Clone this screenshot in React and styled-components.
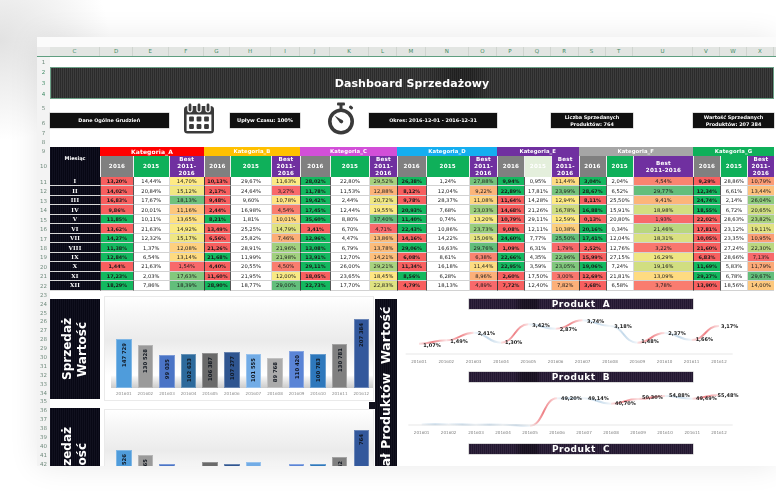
import React from "react";
import styled, { createGlobalStyle } from "styled-components";

const COLS = "50px 33px 35.5px 35.5px 26px 41px 29px 30px 39px 28px 28.5px 43.5px 28px 27px 27px 27.5px 27px 27.5px 60px 27px 27px 27px";
const LETTERS = "C D E F G H I J K L M N O P Q R S T U V W X".split(" ");
const SANS = `"DejaVu Sans", Verdana, sans-serif`;
const CATS = [
  ["Kategoria_A", "#ff0000"], ["Kategoria_B", "#ffc000"], ["Kategoria_C", "#d24fd8"], ["Kategoria_D", "#14aef0"],
  ["Kategoria_E", "#7030a0"], ["Kategoria_F", "#a6a6a6"], ["Kategoria_G", "#0fb05a"],
];
const ROMAN = ["I", "II", "III", "IV", "V", "VI", "VII", "VIII", "IX", "X", "XI", "XII"];
const DATA = [
  "13,20 14,44 14,70 10,13 29,67 11,63 28,02 22,80 29,52 26,38 1,24 27,88 9,94 0,95 11,44 3,04 2,04 4,54 9,29 28,86 10,79",
  "14,02 20,84 15,12 2,17 24,64 3,27 11,78 11,53 12,88 8,12 12,04 9,22 22,89 17,81 23,99 28,67 6,52 29,77 12,34 6,61 13,44",
  "16,83 17,67 18,13 9,48 9,60 10,78 19,42 2,44 20,72 9,78 28,37 11,08 11,64 14,28 12,94 8,11 25,50 9,41 24,74 2,14 26,04",
  "9,86 20,01 11,16 2,44 16,98 4,54 17,45 12,44 19,55 20,93 7,68 23,03 14,68 21,26 16,78 16,88 15,91 18,98 18,55 6,72 20,65",
  "11,85 10,11 13,65 8,21 1,81 10,01 35,60 8,80 37,40 11,40 0,74 13,20 10,79 29,11 12,59 0,13 20,80 1,93 22,02 28,63 23,82",
  "13,62 21,63 14,92 13,49 25,25 14,79 3,41 6,70 4,71 22,43 10,86 23,73 9,08 12,11 10,38 20,16 0,34 21,46 17,81 23,12 19,11",
  "14,27 12,32 15,17 6,56 25,82 7,46 12,96 4,47 13,86 14,16 14,22 15,06 24,60 7,77 25,50 17,41 12,04 18,31 10,05 23,35 10,95",
  "11,38 1,37 12,08 21,26 28,91 21,96 13,08 6,79 13,78 29,06 16,63 29,76 1,09 6,31 1,79 2,52 12,76 3,22 21,60 27,24 22,30",
  "12,84 6,54 13,14 21,68 11,99 21,98 13,91 12,70 14,21 6,08 8,61 6,38 22,66 4,35 22,96 15,99 27,15 16,29 6,83 28,66 7,13",
  "1,44 21,63 1,54 4,40 20,55 4,50 29,11 26,00 29,21 11,34 16,18 11,44 22,95 3,59 23,05 19,06 7,24 19,16 11,69 5,83 11,79",
  "17,23 2,03 17,63 11,60 21,95 12,00 18,05 23,65 18,45 8,56 6,28 8,96 2,60 17,50 3,00 12,69 21,81 13,09 29,27 6,78 29,67",
  "18,29 7,86 18,39 28,90 18,77 29,00 22,73 17,70 22,83 4,79 18,13 4,89 7,72 12,40 7,82 3,68 6,58 3,78 13,90 18,56 14,00",
].map((r) => r.split(" "));
const num = (s) => parseFloat(s.replace(",", "."));

const mix = (a, b, t) => a.map((v, i) => Math.round(v + (b[i] - v) * t));
function bestColours(cat) {
  const vals = DATA.map((r) => num(r[cat * 3 + 2]));
  const sorted = [...vals].sort((x, y) => x - y);
  const min = sorted[0], max = sorted[11], mid = (sorted[5] + sorted[6]) / 2;
  const R = [248, 105, 107], Y = [255, 235, 132], G = [99, 190, 123];
  return vals.map((v) => {
    const c = v < mid ? mix(R, Y, (v - min) / (mid - min)) : mix(Y, G, (v - mid) / (max - mid));
    return `rgb(${c.join(",")})`;
  });
}
const BEST = CATS.map((_, i) => bestColours(i));

const ROW_NUMS = [
  [1, 10], [2, 10.67], [3, 10.67], [4, 10.66], [5, 19], [6, 10], [7, 9.5], [8, 9], [9, 9.5], [10, 21],
  ...Array.from({ length: 12 }, (_, i) => [11 + i, 9.47]),
  ...Array.from({ length: 20 }, (_, i) => [23 + i, i === 0 ? 8.6 : 8.9]),
];

const SALES = [
  [147729, "#4f9cdb"], [130528, "#9a9a9a"], [99035, "#4a74c6"], [102633, "#2d6a9c"], [106387, "#6a6a6a"], [107277, "#2f5590"],
  [101555, "#72ace6"], [89768, "#ababab"], [110420, "#5a84d6"], [100783, "#2e78bc"], [130781, "#808080"], [207384, "#33589c"],
];
const QTY = [526, 465, 358, 310, 382, 360, 385, 320, 360, 362, 442, 764];
const PERIODS = Array.from({ length: 12 }, (_, i) => `2016${String(i + 1).padStart(2, "0")}`);
const spaced = (n) => String(n).replace(/\B(?=(\d{3})+$)/g, " ");

const LINE_A = {
  ticks: [147, 229, 311, 393, 475, 557, 638, 720, 802, 884, 965, 1047],
  ys: [158, 148, 125, 155, 100, 113, 88, 105, 155, 126, 147, 105],
  labels: [["1,07%", 186, 162], ["1,49%", 267, 150], ["2,41%", 349, 126], ["1,30%", 431, 155], ["3,42%", 513, 103], ["2,87%", 595, 114], ["3,74%", 677, 91], ["3,18%", 759, 106], ["1,48%", 840, 150], ["2,37%", 921, 127], ["1,66%", 1003, 146], ["3,17%", 1079, 106]],
  axis: [107, 1088, 189], tickY: 210, dy: 18,
};
const LINE_B = {
  ticks: [155, 236, 318, 399, 480, 561, 642, 723, 804, 885, 967, 1047],
  ys: [400, 400, 401, 401, 404, 322, 322, 338, 324, 315, 323, 312],
  labels: [["49,20%", 604, 322], ["49,14%", 685, 322], ["40,70%", 766, 337], ["50,30%", 847, 320], ["54,88%", 928, 314], ["49,49%", 1009, 323], ["55,48%", 1074, 312]],
  axis: [115, 1088, 402], tickY: 423, dy: 91,
};

const Global = createGlobalStyle`
  html, body { margin: 0; padding: 0; background: #fff; }
  body { width: 776px; height: 502px; overflow: hidden; font-family: ${SANS}; }
`;
const Page = styled.div`
  width: 776px; height: 502px; overflow: hidden; position: relative;
  background: radial-gradient(ellipse 110px 100px at 0 40px, #e2e2e2 0%, #f6f6f6 70%, #fff 100%);
`;
const Sheet = styled.div`
  margin: 37px 0 0 37px; width: 739px; height: 429px; overflow: hidden;
  background: #fff; box-shadow: 0 0 28px rgba(0, 0, 0, .09);
  filter: blur(.42px);
`;
const Ribbon = styled.div`height: 10px; background: #fbfbfb;`;
const HeaderRow = styled.div`display: flex; height: 9px; background: #e2e5e2; border-bottom: 1px solid #5f9e80;`;
const Corner = styled.div`width: 13px; background: #ececec;`;
const Columns = styled.div`display: grid; grid-template-columns: ${COLS};`;
const ColLetter = styled.div`
  font-size: 5.5px; line-height: 9px; text-align: center; color: #3d8a63; border-right: 1px solid #cfd4cf;
`;
const Body = styled.div`display: flex;`;
const RowNumbers = styled.div`width: 13px; flex: none; background: #f3f3f3; height: 420px; overflow: hidden;`;
const RowNum = styled.div`
  height: ${(p) => p.$h}px; display: flex; align-items: center; justify-content: center;
  font-size: 5.5px; color: ${(p) => (p.$active ? "#3d8a63" : "#6f8a7c")};
`;
const Content = styled.div`width: 724px; flex: none;`;
const BlankRow = styled.div`height: 10px;`;
const Banner = styled.div`
  height: 32px; box-sizing: border-box; border: 1px solid #6aa086;
  display: flex; align-items: center; justify-content: center;
  color: #fff; font-weight: 700; font-size: 11px; letter-spacing: .1px;
  background:
    linear-gradient(90deg, transparent 0 52%, rgba(0,0,0,.28) 56% 58%, transparent 61%),
    repeating-linear-gradient(90deg, #3d3d3d 0 1px, #2b2b2b 1px 2px);
`;
const InfoRow = styled.div`
  display: grid; grid-template-columns: ${COLS}; height: 47.5px; padding-top: 14px; box-sizing: border-box;
  grid-template-rows: 15px;
`;
const InfoBar = styled.div`
  grid-column: ${(p) => p.$span};
  background: #111; color: #fff; font-weight: 700; font-size: ${(p) => p.$size || 4.9}px; line-height: 6.4px;
  display: flex; align-items: center; justify-content: center; text-align: center;
  box-shadow: 0 0 0 .5px #bbb;
`;
const IconCell = styled.div`
  grid-column: ${(p) => p.$span}; display: flex; justify-content: center; align-items: flex-start;
  margin-top: -11px; padding-left: ${(p) => p.$pad || 0}px;
`;
const Table = styled.div`
  display: grid; grid-template-columns: ${COLS};
  grid-template-rows: 9.5px 21px repeat(12, 9.47px);
`;
const navy = `
  background: repeating-linear-gradient(90deg, #10101f 0 1px, #070714 1px 2px);
`;
const MonthHead = styled.div`
  grid-row: 1 / span 2; ${navy}
  color: #fff; font-weight: 700; font-size: 5px; display: flex; align-items: center; justify-content: center;
  padding-bottom: 8px; box-sizing: border-box;
`;
const CatHead = styled.div`
  grid-column: span 3; background: ${(p) => p.$bg}; color: #fff; font-weight: 700;
  font-size: ${(p) => (p.$large ? 6 : 5.3)}px; letter-spacing: .1px;
  display: flex; align-items: center; justify-content: center;
`;
const YearHead = styled.div`
  background: ${(p) => p.$bg}; color: #fff; font-weight: 700; font-size: 5.6px; letter-spacing: .2px;
  display: flex; align-items: center; justify-content: center; text-align: center; line-height: 7px;
  overflow: hidden; border-left: .5px solid #eee; box-sizing: border-box;
`;
const MonthCell = styled.div`
  ${navy} color: #fff; font-family: "DejaVu Serif", serif; font-weight: 700; font-size: 5.6px; letter-spacing: .2px;
  display: flex; align-items: center; justify-content: center;
  border-bottom: 1px solid #d8d8d8; box-sizing: border-box;
`;
const Cell = styled.div`
  background: ${(p) => p.$bg}; color: #1a1a1a; font-size: ${(p) => (p.$bold ? 4.9 : 5.2)}px;
  font-weight: ${(p) => (p.$bold ? 700 : 400)};
  display: flex; align-items: center; justify-content: center;
  box-sizing: border-box; border-bottom: 1px solid #d2d2d2;
  border-left: 1px solid ${(p) => p.$edge || "#e4e4e4"};
`;
const Lower = styled.div`display: flex; padding-top: 5.3px; height: 176px; box-sizing: border-box;`;
const ChartColumn = styled.div`display: flex; flex-direction: column; gap: 8px; width: 324px; flex: none;`;
const ChartRow = styled.div`display: flex; align-items: flex-start; gap: 4px; height: ${(p) => p.$h}px; flex: none;`;
const SideLabel = styled.div`
  width: 50px; height: 100px; flex: none; margin-top: ${(p) => p.$top}px;
  background: repeating-linear-gradient(90deg, #11111f 0 1px, #080815 1px 2px);
  display: flex; align-items: center; justify-content: center; text-align: center;
`;
const SideText = styled.div`
  writing-mode: vertical-rl; transform: rotate(180deg);
  color: #fff; font-weight: 700; font-size: 12px; line-height: 15px;
`;
const Panel = styled.div`
  width: 270px; flex: none; box-sizing: border-box; height: ${(p) => p.$h}px; border: 1px solid #eaeaea; background: #fff;
`;
const Plot = styled.div`
  display: grid; grid-template-columns: repeat(12, 21.6px); padding-left: 8px; align-items: end;
  height: ${(p) => p.$h}px; box-sizing: border-box;
  background:
    linear-gradient(180deg, transparent 86%, rgba(170,170,170,.12) 88%, rgba(140,140,140,.45) 100%) 6px 0 / 262px 100% no-repeat,
    linear-gradient(180deg, #fff 0%, #f6f6f6 20%, #ebebeb 48%, #f8f8f8 72%, #fff 86%);
`;
const BarSlot = styled.div`display: flex; justify-content: center;`;
const Bar = styled.div`
  width: 15.5px; box-sizing: border-box; background: ${(p) => p.$bg};
  border: 1px solid rgba(255,255,255,.28); display: flex; justify-content: center; align-items: flex-start;
`;
const BarValue = styled.span`
  writing-mode: vertical-rl; transform: rotate(180deg); margin-top: 3px; white-space: nowrap;
  color: #10161f; font-weight: 700; font-size: 5.3px; line-height: 6px;
`;
const Periods = styled.div`display: grid; grid-template-columns: repeat(12, 21.6px); padding: 3px 0 0 8px;`;
const Period = styled.div`color: #8a8a8a; font-size: 4.1px; text-align: center;`;
const WideLabel = styled.div`
  position: relative; width: 22px; height: 200px; margin: 2.7px 0 0 1px; flex: none; box-sizing: border-box;
  background: repeating-linear-gradient(90deg, #13131f 0 1px, #0a0a16 1px 2px);
  &::before {
    content: ""; position: absolute; left: -6px; top: 103px; width: 6px; height: 7px; background: #10101c;
  }
`;
const WideText = styled.div`
  writing-mode: vertical-rl; transform: rotate(180deg); height: 100%; width: 100%; box-sizing: border-box;
  text-align: end; padding-bottom: 8px; color: #fff; font-weight: 700; font-size: 12.5px; line-height: 22px; white-space: pre;
  display: block;
`;
const Products = styled.div`display: flex; flex-direction: column; flex: 1; padding-top: 2.7px;`;
const ProductBar = styled.div`
  width: 224px; height: 10px; margin-left: 72px; flex: none; box-sizing: border-box;
  background:
    linear-gradient(90deg, transparent 20%, rgba(0,0,0,.35) 24% 30%, transparent 32%),
    repeating-linear-gradient(90deg, #33263f 0 1px, #221830 1px 2px);
  box-shadow: 0 0 0 .5px #b5b5b5;
  color: #fff; font-weight: 700; font-size: 9px; letter-spacing: .5px; white-space: pre;
  display: flex; align-items: center; justify-content: center;
`;
const LineSvg = styled.svg`display: block; flex: none; overflow: visible;`;
const ValueText = styled.text`font-family: ${SANS}; font-size: 5px; font-weight: 700; fill: #1e1e1e;`;
const TickText = styled.text`font-family: ${SANS}; font-size: 4.1px; fill: #808080;`;

function Calendar() {
  return (
    <svg width="32" height="32" viewBox="0 0 32 32">
      <rect x="1" y="4" width="30" height="27.5" rx="3.5" fill="#3a3a3a" />
      <rect x="3.6" y="12.5" width="24.8" height="16.5" fill="#fff" />
      {[7, 16, 25].map((x) => (
        <g key={x}>
          <rect x={x - 2.7} y="0.5" width="5.4" height="10" rx="2.7" fill="#fff" />
          <rect x={x - 1.4} y="1.5" width="2.8" height="8" rx="1.4" fill="#3a3a3a" />
        </g>
      ))}
      {[8.5, 16, 23.5].flatMap((x) =>
        [17, 24.5].map((y) => <rect key={`${x}${y}`} x={x - 2.4} y={y - 2.4} width="4.8" height="4.8" rx="1" fill="#3a3a3a" />)
      )}
    </svg>
  );
}
function Stopwatch() {
  return (
    <svg width="28" height="33" viewBox="0 0 28 33">
      <rect x="10" y="0.5" width="8" height="3" rx="1" fill="#3a3a3a" />
      <rect x="12.5" y="3" width="3" height="4" fill="#3a3a3a" />
      <rect x="22" y="4" width="4" height="3" rx="1" transform="rotate(42 24 5.5)" fill="#3a3a3a" />
      <circle cx="14" cy="19.5" r="11.2" fill="#fff" stroke="#3a3a3a" strokeWidth="3.6" />
      <path d="M7.5 13.5 L15.4 18.2 L13.2 21 Z" fill="#3a3a3a" />
      <circle cx="14.4" cy="19.6" r="1.8" fill="#3a3a3a" />
    </svg>
  );
}

function LineChart({ id, spec, height }) {
  const px = (X) => X / 3 - 27;
  const py = (Y) => Y / 3 - spec.dy;
  const [ax0, ax1, axY] = spec.axis;
  const segs = spec.ticks.slice(1).map((t, i) => {
    const x0 = px(spec.ticks[i]), x1 = px(t), y0 = py(spec.ys[i]), y1 = py(spec.ys[i + 1]);
    const mid = (x0 + x1) / 2;
    return { x0, x1, d: `M${x0} ${y0} C${mid} ${y0} ${mid} ${y1} ${x1} ${y1}`, up: y1 < y0 - 0.5 };
  });
  return (
    <LineSvg width="377" height={height} viewBox={`0 0 377 ${height}`}>
      <defs>
        {segs.map((s, i) => (
          <linearGradient key={i} id={`${id}${i}`} gradientUnits="userSpaceOnUse" x1={s.x0} x2={s.x1} y1="0" y2="0">
            <stop offset="0" stopColor={s.up ? "#f08a8e" : "#c4d9ea"} stopOpacity=".25" />
            <stop offset=".5" stopColor={s.up ? "#ee8085" : "#c4d9ea"} />
            <stop offset="1" stopColor={s.up ? "#f08a8e" : "#c4d9ea"} stopOpacity=".25" />
          </linearGradient>
        ))}
      </defs>
      {segs.map((s, i) => <path key={i} d={s.d} fill="none" stroke={`url(#${id}${i})`} strokeWidth="2" />)}
      <line x1={px(ax0)} x2={px(ax1)} y1={py(axY)} y2={py(axY)} stroke="#dcdcdc" strokeWidth=".7" />
      {spec.ticks.map((t, i) => (
        <TickText key={t} x={px(t)} y={py(spec.tickY) + 1.5} textAnchor="middle">{PERIODS[i]}</TickText>
      ))}
      {spec.labels.map(([txt, X, Y]) => (
        <ValueText key={txt} x={px(X)} y={py(Y) + 1.8} textAnchor="middle">{txt}</ValueText>
      ))}
    </LineSvg>
  );
}

function Bars({ items, scale, plot, periods }) {
  return (
    <>
      <Plot $h={plot}>
        {items.map(([v, c], i) => (
          <BarSlot key={i}>
            <Bar $bg={c} style={{ height: v * scale }}>
              <BarValue>{spaced(v)}</BarValue>
            </Bar>
          </BarSlot>
        ))}
      </Plot>
      {periods && (
        <Periods>{PERIODS.map((p) => <Period key={p}>{p}</Period>)}</Periods>
      )}
    </>
  );
}

export default function App() {
  return (
    <Page>
      <Global />
      <Sheet>
        <Ribbon />
        <HeaderRow>
          <Corner />
          <Columns>{LETTERS.map((l) => <ColLetter key={l}>{l}</ColLetter>)}</Columns>
        </HeaderRow>
        <Body>
          <RowNumbers>
            {ROW_NUMS.map(([n, h]) => <RowNum key={n} $h={h} $active={n >= 2 && n <= 4}>{n}</RowNum>)}
          </RowNumbers>
          <Content>
            <BlankRow />
            <Banner>Dashboard Sprzedażowy</Banner>
            <InfoRow>
              <InfoBar $span="1 / 4">Dane Ogólne Grudzień</InfoBar>
              <IconCell $span="4 / 6"><Calendar /></IconCell>
              <InfoBar $span="6 / 8" $size={5.1}>Upływ Czasu: 100%</InfoBar>
              <IconCell $span="8 / 10" $pad="12"><Stopwatch /></IconCell>
              <InfoBar $span="10 / 14">Okres: 2016-12-01 - 2016-12-31</InfoBar>
              <InfoBar $span="16 / 19">Liczba Sprzedanych<br />Produktów: 764</InfoBar>
              <InfoBar $span="20 / 23">Wartość Sprzedanych<br />Produktów: 207 384</InfoBar>
            </InfoRow>
            <Table>
              <MonthHead>Miesiąc</MonthHead>
              {CATS.map(([n, c], i) => <CatHead key={n} $bg={c} $large={i === 0}>{n}</CatHead>)}
              {CATS.map(([n], i) => (
                <React.Fragment key={n}>
                  <YearHead $bg="#808080">2016</YearHead>
                  <YearHead $bg={i === 4 ? "#e4efdc" : "#0fb05a"}>2015</YearHead>
                  <YearHead $bg="#7030a0">Best<br />2011-2016</YearHead>
                </React.Fragment>
              ))}
              {DATA.map((row, r) => (
                <React.Fragment key={r}>
                  <MonthCell>{ROMAN[r]}</MonthCell>
                  {CATS.map(([n], c) => {
                    const [a, b, best] = row.slice(c * 3, c * 3 + 3);
                    const up = num(a) > num(b);
                    return (
                      <React.Fragment key={n}>
                        <Cell $bg={up ? "#13b85f" : "#f85f5f"} $edge="#3a3a3a" $bold>{a}%</Cell>
                        <Cell $bg="#fff" $edge="#555">{b}%</Cell>
                        <Cell $bg={BEST[c][r]} $edge="#d8d8d8">{best}%</Cell>
                      </React.Fragment>
                    );
                  })}
                </React.Fragment>
              ))}
            </Table>
            <Lower>
              <ChartColumn>
                <ChartRow $h={105}>
                  <SideLabel $top={3}><SideText>Sprzedaż<br />Wartość</SideText></SideLabel>
                  <Panel $h={105}>
                    <Bars items={SALES} scale={68.4 / 207384} plot={90.7} periods />
                  </Panel>
                </ChartRow>
                <ChartRow $h={105}>
                  <SideLabel $top={-1}><SideText>Sprzedaż<br />Ilość</SideText></SideLabel>
                  <Panel $h={105}>
                    <Bars items={QTY.map((v, i) => [v, SALES[i][1]])} scale={64 / 764} plot={84} />
                  </Panel>
                </ChartRow>
              </ChartColumn>
              <WideLabel><WideText>Udział Produktów  Wartość</WideText></WideLabel>
              <Products>
                <ProductBar>Produkt  A</ProductBar>
                <LineChart id="a" spec={LINE_A} height={63} />
                <ProductBar>Produkt  B</ProductBar>
                <LineChart id="b" spec={LINE_B} height={62} />
                <ProductBar>Produkt  C</ProductBar>
              </Products>
            </Lower>
          </Content>
        </Body>
      </Sheet>
    </Page>
  );
}
